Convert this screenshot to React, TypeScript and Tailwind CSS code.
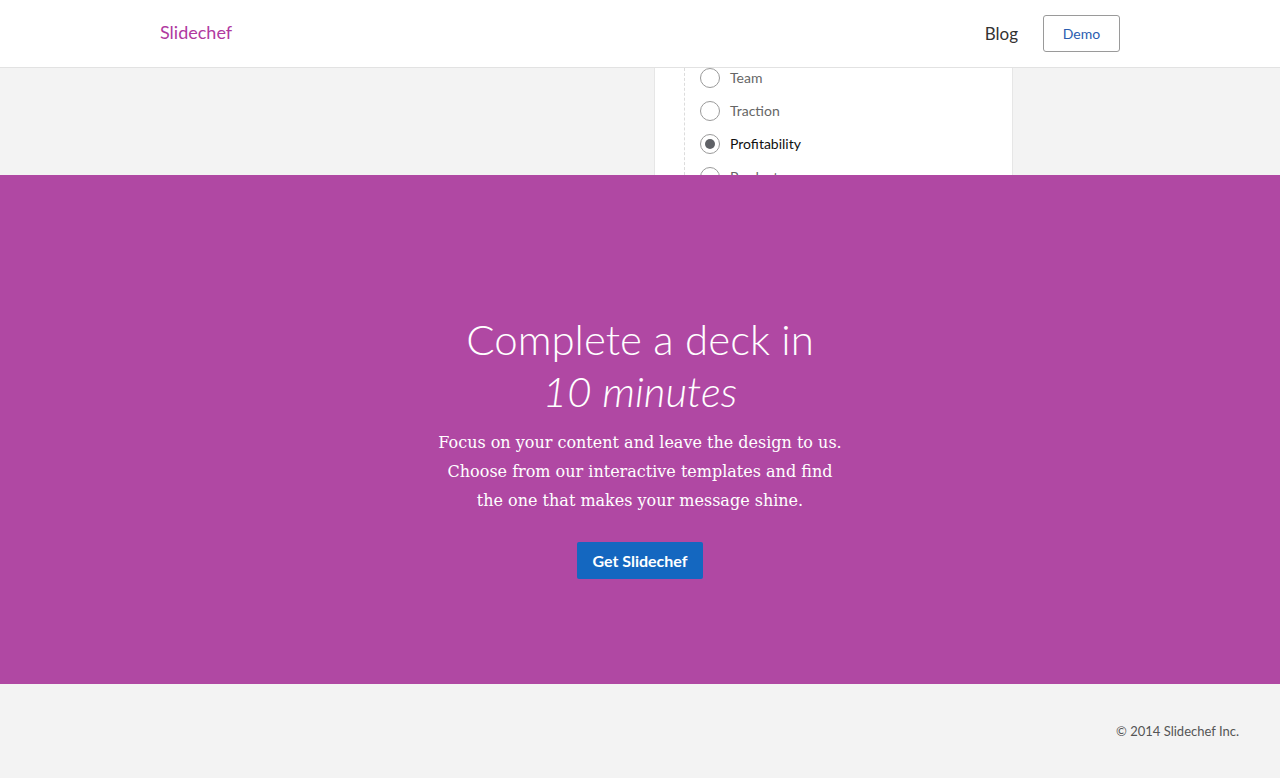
import { useState } from "react"

const sections = ["Team", "Traction", "Profitability", "Product"]

function Radio({ checked }: { checked: boolean }) {
  return (
    <span className="flex h-5 w-5 shrink-0 items-center justify-center rounded-full border border-[#9a9a9a] bg-white">
      {checked && <span className="h-[10px] w-[10px] rounded-full bg-[#5f6166]" />}
    </span>
  )
}

export default function App() {
  const [active, setActive] = useState("Profitability")

  return (
    <div className="min-h-screen bg-[#f3f3f3] font-['Lato',sans-serif]">
      {/* Header */}
      <header className="border-b border-[#e2e2e2] bg-white">
        <div className="flex h-[67px] items-center justify-between pl-[160px] pr-[160px]">
          <a href="#" className="text-[18px] text-[#b0399f] -mt-[2px]">
            Slidechef
          </a>
          <nav className="flex items-center gap-[25px]">
            <a href="#" className="text-[17px] text-[#333]">
              Blog
            </a>
            <a
              href="#"
              className="flex h-[37px] w-[77px] items-center justify-center rounded-[3px] border border-[#9a9a9a] text-[14px] text-[#2a5db0]"
            >
              Demo
            </a>
          </nav>
        </div>
      </header>

      {/* Template picker preview */}
      <section className="h-[107px] overflow-hidden">
        <div className="ml-[654px] h-full w-[359px] border-x border-[#e6e6e6] bg-white pl-[29px]">
          <div className="h-full border-l border-dashed border-[#dcdcdc] pl-[15px]">
            <ul>
              {sections.map((s) => (
                <li
                  key={s}
                  onClick={() => setActive(s)}
                  className="mb-[13px] flex h-5 cursor-pointer items-center gap-[10px]"
                >
                  <Radio checked={active === s} />
                  <span
                    className={`-mt-[2px] text-[14px] ${
                      active === s ? "text-[#111]" : "text-[#666]"
                    }`}
                  >
                    {s}
                  </span>
                </li>
              ))}
            </ul>
          </div>
        </div>
      </section>

      {/* Hero */}
      <section className="flex h-[509px] flex-col items-center bg-[#b048a3] pt-[138px] text-center text-white">
        <h2 className="text-[42px] leading-[52px] font-light">
          Complete a deck in
          <br />
          <em className="font-light">10 minutes</em>
        </h2>
        <p className="mt-[11px] w-[410px] font-['DejaVu_Serif',serif] text-[16px] leading-[29px]">
          Focus on your content and leave the design to us. Choose from our
          interactive templates and find the one that makes your message shine.
        </p>
        <a
          href="#"
          className="mt-[27px] flex h-[37px] w-[126px] items-center justify-center rounded-[2px] bg-[#1467c0] text-[16px] font-bold text-white"
        >
          Get Slidechef
        </a>
      </section>

      {/* Footer */}
      <footer className="flex h-[94px] items-center justify-end pr-[41px] pt-[2px]">
        <span className="text-[13px] text-[#555]">© 2014 Slidechef Inc.</span>
      </footer>
    </div>
  )
}
